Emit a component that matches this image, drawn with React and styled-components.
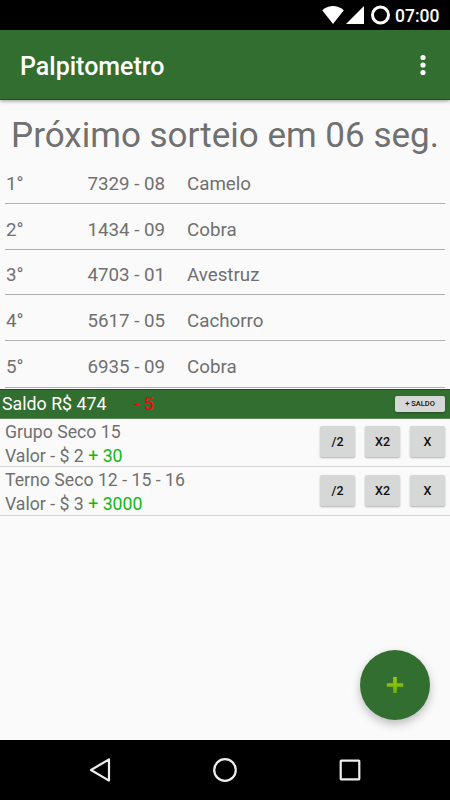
import React from "react";
import styled, { createGlobalStyle } from "styled-components";

const draws = [
  { place: "1°", number: "7329 - 08", animal: "Camelo" },
  { place: "2°", number: "1434 - 09", animal: "Cobra" },
  { place: "3°", number: "4703 - 01", animal: "Avestruz" },
  { place: "4°", number: "5617 - 05", animal: "Cachorro" },
  { place: "5°", number: "6935 - 09", animal: "Cobra" },
];

const bets = [
  { name: "Grupo Seco 15", value: 2, prize: 30 },
  { name: "Terno Seco 12 - 15 - 16", value: 3, prize: 3000 },
];

const StatusBar = () => (
  <StyledStatus>
    <svg width="72" height="30" viewBox="0 0 72 30" fill="#fff">
      <path d="M0.2 10.2 Q11 2 21.8 10.2 L11 24 Z" />
      <path d="M24 24 L42 6 V24 Z" />
      <circle cx="58.5" cy="15" r="8" fill="none" stroke="#fff" strokeWidth="3" />
    </svg>
    <span>07:00</span>
  </StyledStatus>
);

const Toolbar = () => (
  <StyledToolbar>
    <h1>Palpitometro</h1>
    <svg width="6" height="22" viewBox="0 0 6 22" fill="#fff">
      <circle cx="3" cy="3.5" r="2.6" />
      <circle cx="3" cy="11" r="2.6" />
      <circle cx="3" cy="18.5" r="2.6" />
    </svg>
  </StyledToolbar>
);

const Bet = ({ bet }) => (
  <BetRow>
    <div>
      <p>{bet.name}</p>
      <p>
        Valor - $ {bet.value} <Prize>+ {bet.prize}</Prize>
      </p>
    </div>
    <Actions>
      <Button>/2</Button>
      <Button>X2</Button>
      <Button>X</Button>
    </Actions>
  </BetRow>
);

const NavBar = () => (
  <StyledNav>
    <svg width="30" height="30" viewBox="0 0 30 30">
      <path d="M6 15 L24 4.4 V25.6 Z" />
    </svg>
    <svg width="30" height="30" viewBox="0 0 30 30">
      <circle cx="15" cy="15" r="10.8" />
    </svg>
    <svg width="30" height="30" viewBox="0 0 30 30">
      <rect x="5.7" y="5.7" width="18.6" height="18.6" rx="0.5" />
    </svg>
  </StyledNav>
);

const App = () => {
  return (
    <Screen>
      <GlobalStyle />
      <StatusBar />
      <Toolbar />
      <Content>
        <Countdown>Próximo sorteio em 06 seg.</Countdown>
        {draws.map((draw) => (
          <DrawRow key={draw.place}>
            <span>{draw.place}</span>
            <span>{draw.number}</span>
            <span>{draw.animal}</span>
          </DrawRow>
        ))}
        <Balance>
          <span>Saldo R$ 474</span>
          <Loss>- 5</Loss>
          <BalanceButton>+ SALDO</BalanceButton>
        </Balance>
        {bets.map((bet) => (
          <Bet key={bet.name} bet={bet} />
        ))}
        <Fab>
          <svg width="18" height="18" viewBox="0 0 18 18">
            <defs>
              <linearGradient id="plus" x1="0" y1="0" x2="0" y2="1">
                <stop offset="0" stopColor="#9ccb0c" />
                <stop offset="1" stopColor="#6fb004" />
              </linearGradient>
            </defs>
            <path
              d="M7.2 1 H10.8 V7.2 H17.2 V10.8 H10.8 V17 H7.2 V10.8 H0.8 V7.2 H7.2 Z"
              fill="url(#plus)"
            />
          </svg>
        </Fab>
      </Content>
      <NavBar />
    </Screen>
  );
};

const GlobalStyle = createGlobalStyle`
  * {
    margin: 0;
    padding: 0;
    box-sizing: border-box;
  }
  body {
    font-family: Roboto, sans-serif;
    background: #fafafa;
    overflow: hidden;
  }
`;

const Screen = styled.div`
  width: 450px;
  height: 800px;
  display: flex;
  flex-direction: column;
  background: #fafafa;
  color: #707070;
`;

const StyledStatus = styled.div`
  height: 30px;
  padding-right: 9px;
  display: flex;
  justify-content: flex-end;
  align-items: center;
  background: black;
  color: white;
  svg {
    margin-right: 1px;
  }
  span {
    width: 46px;
    font-size: 17.5px;
    font-weight: 500;
    line-height: 30px;
    padding-top: 1px;
  }
`;

const StyledToolbar = styled.header`
  height: 70px;
  padding: 0 24px 0 20px;
  display: flex;
  justify-content: space-between;
  align-items: center;
  background: #326e30;
  border-bottom: 1px solid #0f5c0c;
  box-shadow: 0 1px 4px rgba(0, 0, 0, 0.4);
  z-index: 1;
  h1 {
    color: white;
    font-size: 25px;
    font-weight: 500;
    line-height: 30px;
    padding-top: 5px;
  }
`;

const Content = styled.main`
  position: relative;
  height: 640px;
`;

const Countdown = styled.h2`
  height: 58.4px;
  padding-top: 14px;
  font-size: 35px;
  font-weight: 400;
  line-height: 44px;
  text-align: center;
  white-space: nowrap;
`;

const DrawRow = styled.div`
  height: 45.6px;
  margin: 0 5px;
  padding: 7.8px 0 0 1px;
  display: grid;
  grid-template-columns: 81.4px 99.6px 1fr;
  align-items: center;
  border-bottom: 1px solid #b0b0b0;
  font-size: 18.75px;
  line-height: 25px;
  &:nth-of-type(5) {
    height: 47.2px;
    padding-bottom: 1px;
  }
`;

const Balance = styled.section`
  height: 30px;
  margin-top: 1px;
  padding: 0 5px 0 2px;
  display: flex;
  align-items: center;
  background: #326e30;
  border-top: 1px solid #0f5c0c;
  border-bottom: 1px solid #5d8b5b;
  color: white;
  font-size: 17.8px;
  line-height: 28px;
`;

const Loss = styled.span`
  margin-left: 28px;
  color: #f00;
`;

const Prize = styled.span`
  color: #0fb80f;
`;

const Button = styled.button`
  width: 35px;
  height: 31px;
  border: none;
  border-radius: 2px;
  background: #d6d7d7;
  color: #111;
  box-shadow: 0 1px 2px rgba(0, 0, 0, 0.3);
  font-family: Roboto, sans-serif;
  font-size: 12.5px;
  font-weight: 500;
`;

const BalanceButton = styled(Button)`
  width: 50px;
  height: 16px;
  margin-left: auto;
  font-size: 7.5px;
  line-height: 16px;
`;

const BetRow = styled.article`
  height: 48.5px;
  padding: 2px 5px 0;
  display: flex;
  justify-content: space-between;
  border-bottom: 1px solid #d4d4d4;
  font-size: 17.7px;
  line-height: 23.8px;
`;

const Actions = styled.div`
  display: flex;
  gap: 10px;
  padding-top: 5.4px;
`;

const Fab = styled.button`
  position: absolute;
  right: 20px;
  bottom: 20px;
  width: 70px;
  height: 70px;
  display: flex;
  justify-content: center;
  align-items: center;
  border: none;
  border-radius: 50%;
  background: #326e30;
  box-shadow: 0 4px 10px rgba(0, 0, 0, 0.25);
`;

const StyledNav = styled.nav`
  height: 60px;
  padding: 0 85px;
  display: flex;
  justify-content: space-between;
  align-items: center;
  background: black;
  svg {
    fill: none;
    stroke: #eee;
    stroke-width: 2.2;
    stroke-linejoin: round;
  }
`;

export default App;
